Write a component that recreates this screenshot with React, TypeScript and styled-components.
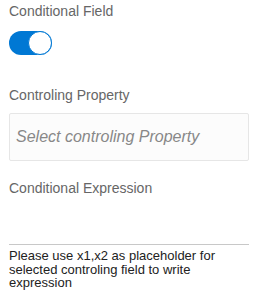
import React from "react";
import styled, { createGlobalStyle } from "styled-components";

const Global = createGlobalStyle`
  html, body { margin: 0; padding: 0; background: #ffffff; }
  body { font-family: "Liberation Sans", Arial, sans-serif; }
`;

const Panel = styled.div`
  display: flex;
  flex-direction: column;
  width: 240px;
  padding: 3px 13px 0 9px;
`;

const Label = styled.div<{ $gap?: number }>`
  font-size: 14px;
  line-height: 16px;
  color: #666666;
  margin-top: ${(p) => p.$gap ?? 0}px;
`;

const Track = styled.div<{ $on: boolean }>`
  display: flex;
  justify-content: ${(p) => (p.$on ? "flex-end" : "flex-start")};
  align-items: center;
  width: 43px;
  height: 24px;
  margin-top: 12px;
  border-radius: 12px;
  background: ${(p) => (p.$on ? "#0078d4" : "#c8c8c8")};
  box-sizing: border-box;
`;

const Knob = styled.div`
  width: 24px;
  height: 24px;
  border-radius: 50%;
  background: #ffffff;
  border: 1px solid #0078d4;
  box-sizing: border-box;
`;

const SelectBox = styled.div`
  display: flex;
  align-items: center;
  height: 48px;
  margin-top: 10px;
  padding: 0 6px;
  box-sizing: border-box;
  background: #fcfcfc;
  border: 1px solid #e6e6e6;
  border-radius: 2px;
  font-size: 16px;
  font-style: italic;
  color: #888888;
`;

const ExpressionField = styled.div`
  height: 49px;
  box-sizing: border-box;
  border-bottom: 1px solid #c8c8c8;
`;

const Help = styled.div`
  margin-top: 4px;
  font-size: 13px;
  line-height: 13.6px;
  color: #222222;
`;

export default function App() {
  return (
    <>
      <Global />
      <Panel>
        <Label>Conditional Field</Label>
        <Track $on>
          <Knob />
        </Track>
        <Label $gap={32}>Controling Property</Label>
        <SelectBox>Select controling Property</SelectBox>
        <Label $gap={19}>Conditional Expression</Label>
        <ExpressionField />
        <Help>
          Please use x1,x2 as placeholder for selected controling field to write
          expression
        </Help>
      </Panel>
    </>
  );
}
